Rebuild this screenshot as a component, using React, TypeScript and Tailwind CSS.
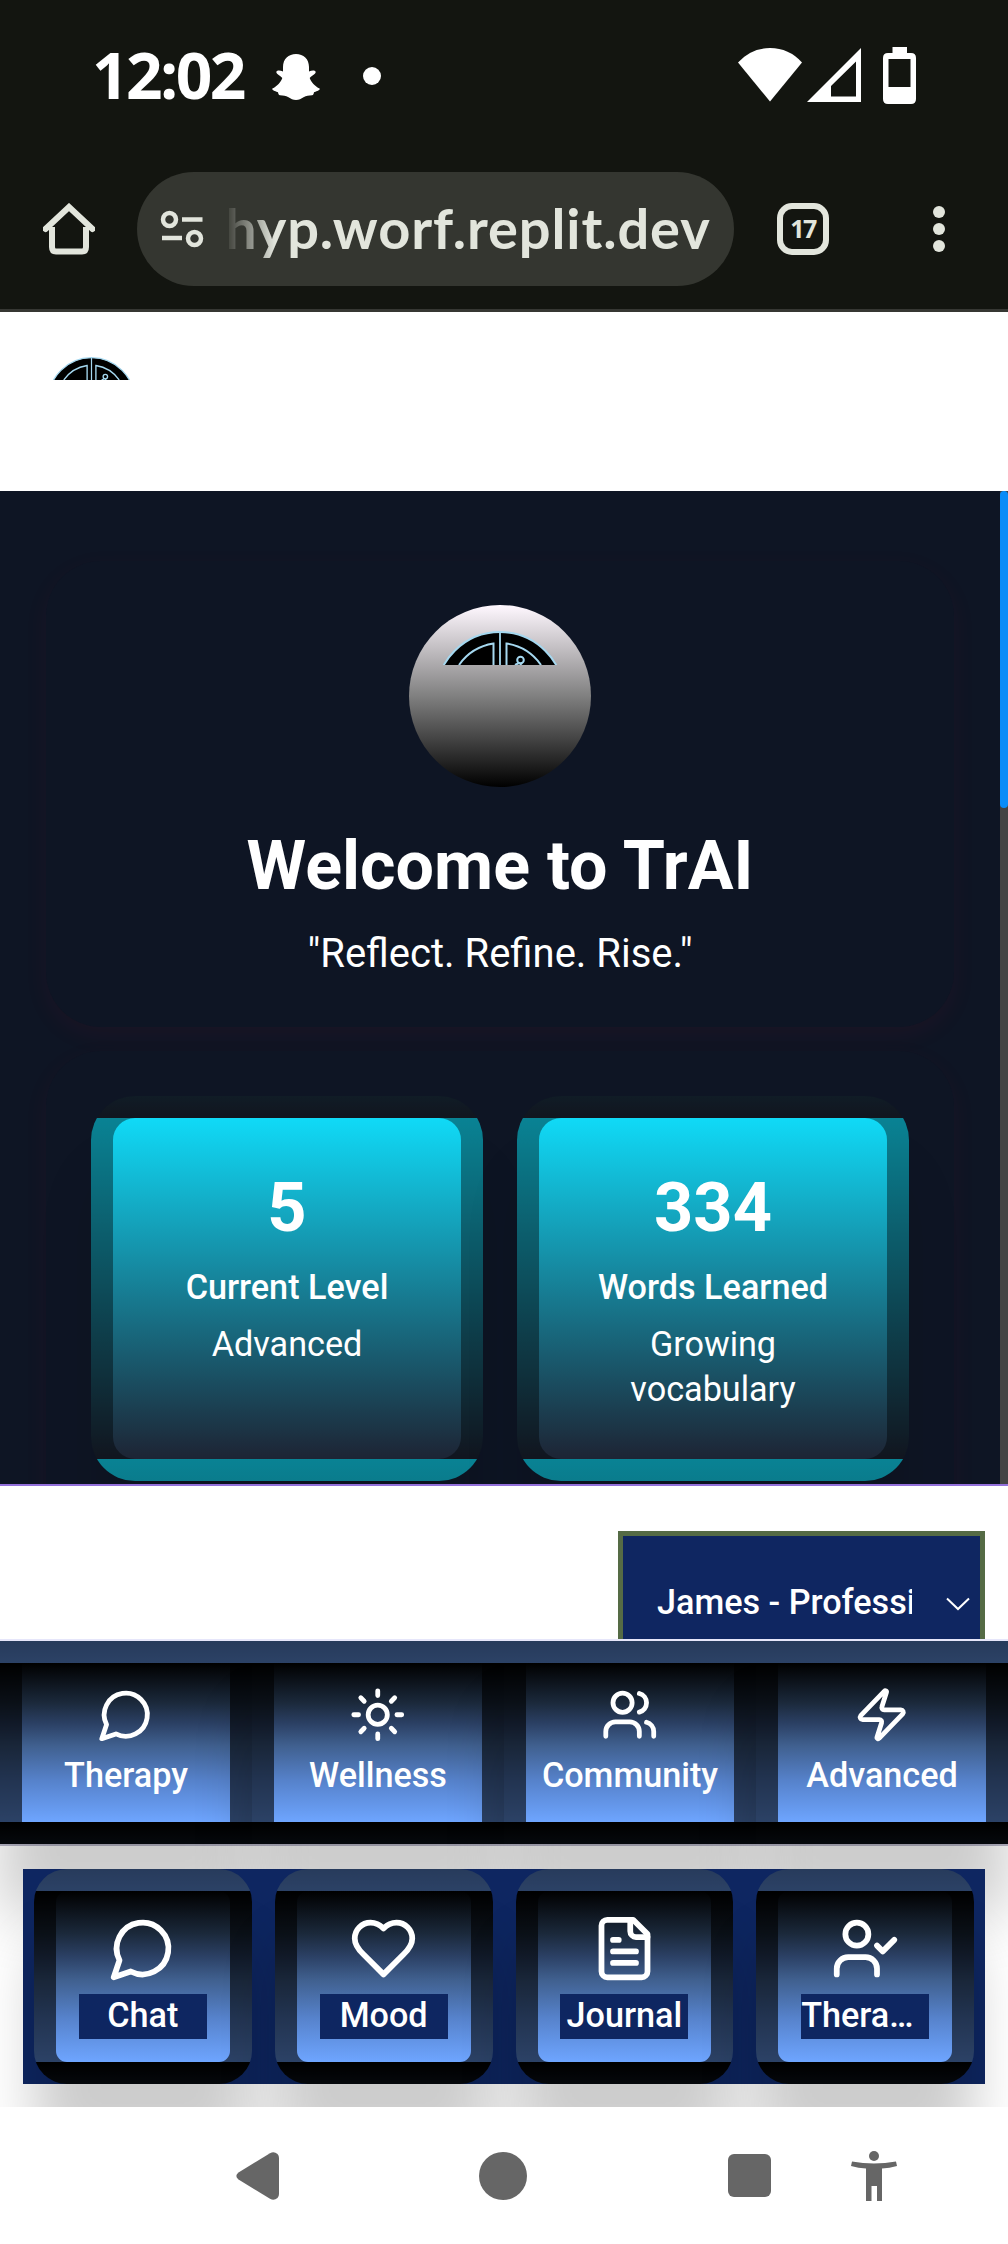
import React from "react";

const strokeProps = {
  viewBox: "0 0 24 24",
  fill: "none",
  stroke: "currentColor",
  strokeWidth: 2,
  strokeLinecap: "round" as const,
  strokeLinejoin: "round" as const,
};

type IconProps = { className: string };

const MessageIcon = ({ className }: IconProps) => (
  <svg {...strokeProps} className={className}>
    <path d="M7.9 20A9 9 0 1 0 4 16.1L2 22Z" />
  </svg>
);

const SunIcon = ({ className }: IconProps) => (
  <svg {...strokeProps} className={className}>
    <circle cx="12" cy="12" r="4" />
    <path d="M12 2v2M12 20v2M4.93 4.93l1.41 1.41M17.66 17.66l1.41 1.41M2 12h2M20 12h2M6.34 17.66l-1.41 1.41M19.07 4.93l-1.41 1.41" />
  </svg>
);

const UsersIcon = ({ className }: IconProps) => (
  <svg {...strokeProps} className={className}>
    <path d="M16 21v-2a4 4 0 0 0-4-4H6a4 4 0 0 0-4 4v2" />
    <circle cx="9" cy="7" r="4" />
    <path d="M22 21v-2a4 4 0 0 0-3-3.87M16 3.13a4 4 0 0 1 0 7.75" />
  </svg>
);

const ZapIcon = ({ className }: IconProps) => (
  <svg {...strokeProps} className={className}>
    <path d="M4 14a1 1 0 0 1-.78-1.63l9.9-10.2a.5.5 0 0 1 .86.46l-1.92 6.02A1 1 0 0 0 13 10h7a1 1 0 0 1 .78 1.63l-9.9 10.2a.5.5 0 0 1-.86-.46l1.92-6.02A1 1 0 0 0 11 14z" />
  </svg>
);

const HeartIcon = ({ className }: IconProps) => (
  <svg {...strokeProps} className={className}>
    <path d="M19 14c1.49-1.46 3-3.21 3-5.5A5.5 5.5 0 0 0 16.5 3c-1.76 0-3 .5-4.5 2-1.5-1.5-2.74-2-4.5-2A5.5 5.5 0 0 0 2 8.5c0 2.3 1.5 4.05 3 5.5l7 7Z" />
  </svg>
);

const FileIcon = ({ className }: IconProps) => (
  <svg {...strokeProps} className={className}>
    <path d="M15 2H6a2 2 0 0 0-2 2v16a2 2 0 0 0 2 2h12a2 2 0 0 0 2-2V7Z" />
    <path d="M14 2v4a2 2 0 0 0 2 2h4M10 9H8M16 13H8M16 17H8" />
  </svg>
);

const UserCheckIcon = ({ className }: IconProps) => (
  <svg {...strokeProps} className={className}>
    <path d="m16 11 2 2 4-4M16 21v-2a4 4 0 0 0-4-4H6a4 4 0 0 0-4 4v2" />
    <circle cx="9" cy="7" r="4" />
  </svg>
);

const BrainLogo = ({ className }: IconProps) => (
  <svg viewBox="-57 0 114 34" className={className} fill="none" stroke="#a5d8f0" strokeWidth="2">
    <circle cx="0" cy="65" r="64" fill="#000" />
    <path d="M0 1V34" strokeWidth="1.8" />
    <path d="M-6.5 34V12.6A52 52 0 0 0-41 34M6.5 34V12.6A52 52 0 0 1 41 34" />
    <circle cx="20.5" cy="29" r="3.3" />
    <path d="M19 32L15 34M22 32L20 34" />
  </svg>
);

function StatusBar() {
  return (
    <div className="flex h-[152px] items-start pl-[92px] pr-[92px] pt-[47px] text-white">
      <span className="-mt-[7px] w-[180px] font-['Open_Sans',sans-serif] text-[64px] font-bold leading-[70px] tracking-[-2.6px]">
        12:02
      </span>
      <svg viewBox="0 0 48 48" className="mt-[6px] h-[48px] w-[48px]" fill="currentColor">
        <path d="M24 1C16.500 1 11 6 11 14v4.500C8.500 17.500 5.500 17 4.500 18.500c-1.200 2.500 5 4.500 5.800 6.500C9 29 5 33.500.4 35.500c-1.200 1.800 4 3 5.600 3.800.2 1.500.7 2.800 2 3 3.500.4 5.500 0 8.500 2 2.300 1.600 4.500 2.700 7.500 2.700s5.200-1.100 7.500-2.700c3-2 5-1.600 8.500-2 1.300-.2 1.800-1.500 2-3 1.600-.8 6.800-2 5.600-3.800C43 33.500 39 29 37.700 25c.8-2 7-4 5.800-6.500-1-1.500-4-1-6.500 0V14C37 6 31.500 1 24 1Z" />
      </svg>
      <span className="ml-[43px] mt-[20px] h-[18px] w-[18px] rounded-full bg-white" />
      <div className="ml-auto flex">
        <svg viewBox="0 0 64 54" className="mt-[1px] h-[54px] w-[64px]" fill="currentColor">
          <path d="M32 53.500L0 14.500Q13 0 32 0T64 14.500Z" />
        </svg>
        <svg viewBox="0 0 54 54" className="ml-[5px] mt-[1px] h-[54px] w-[54px]" fill="currentColor" fillRule="evenodd">
          <path d="M54 0V54H0ZM49 13.500L24 38V48.500H49Z" />
        </svg>
        <svg viewBox="0 0 33 57" className="ml-[22px] h-[57px] w-[33px]" fill="currentColor" fillRule="evenodd">
          <path d="M9.500 0H24V6H28Q33 6 33 11V52Q33 57 28 57H5Q0 57 0 52V11Q0 6 5 6H9.500ZM5.500 12V40H27.500V12Z" />
        </svg>
      </div>
    </div>
  );
}

function BrowserBar() {
  return (
    <div className="flex h-[157px] items-start pt-5 text-[#e2e5dc]">
      <svg viewBox="0 0 52 52" className="ml-[43px] mt-[31px] h-[52px] w-[52px]" fill="none" stroke="currentColor" strokeWidth="6">
        <path d="M9 24V44Q9 48.500 13 48.500H39Q43 48.500 43 44V24" />
        <path d="M2.500 26L26 4L49.500 26" strokeLinecap="round" />
      </svg>
      <div className="ml-[42px] flex h-[114px] w-[597px] items-center rounded-full bg-[#343630]">
        <svg viewBox="0 0 44 38" className="ml-[23px] h-[38px] w-[44px]" fill="none" stroke="currentColor" strokeWidth="4.500">
          <circle cx="9.500" cy="9.500" r="6.500" />
          <circle cx="34.500" cy="28.500" r="6.500" />
          <path d="M22 9.500H42.500M2 28H22" />
        </svg>
        <div className="-mt-[3px] ml-[25px] w-[492px] overflow-hidden whitespace-nowrap [mask-image:linear-gradient(to_right,rgba(0,0,0,.1),#000_46px)]">
          <span className="-ml-[4px] block font-['Lato',sans-serif] text-[56px] font-bold leading-[80px] tracking-[0.9px]">
            hyp.worf.replit.dev
          </span>
        </div>
      </div>
      <div className="ml-[43px] mt-[31px] flex h-[52px] w-[52px] items-center justify-center rounded-[15px] border-[6px] border-[#e2e5dc] font-['Open_Sans',sans-serif] text-[25px] font-bold tracking-[-1.500px]">
        17
      </div>
      <div className="ml-[104px] mt-[34px] flex flex-col gap-[5px]">
        <span className="h-3 w-3 rounded-full bg-[#e2e5dc]" />
        <span className="h-3 w-3 rounded-full bg-[#e2e5dc]" />
        <span className="h-3 w-3 rounded-full bg-[#e2e5dc]" />
      </div>
    </div>
  );
}

function StatCard({ value, label, note }: { value: string; label: string; note: string }) {
  return (
    <div className="h-[385px] w-[392px] rounded-[44px] border-[22px] border-black/40 bg-[linear-gradient(#10daf7,#1d2434)] px-[44px] pt-[50px] text-center shadow-[0_72px_55px_rgba(0,0,0,.1)] [background-clip:border-box]">
      <div className="text-[68.500px] font-bold leading-[80px]">{value}</div>
      <div className="mt-[17px] whitespace-nowrap text-[34.200px] font-medium leading-[45px]">{label}</div>
      <div className="mt-[12px] text-[34.200px] leading-[45px]">{note}</div>
    </div>
  );
}

function Dashboard() {
  return (
    <main className="flex h-[993px] overflow-hidden bg-[#0e1524] text-white">
      <div className="w-[1000px] px-[46px] pt-[70px]">
        <section className="flex h-[466px] flex-col items-center rounded-[55px] bg-[#0e1524] pt-[44px] shadow-[0_8px_26px_rgba(255,20,60,.055)]">
          <div className="flex h-[182px] w-[182px] justify-center rounded-full bg-[linear-gradient(#fff8ff,#808080_50%,#000)]">
            <BrainLogo className="mt-[26px] h-[34px] w-[114px]" />
          </div>
          <h1 className="mt-[38px] text-[68.200px] font-bold leading-[83px]">Welcome to TrAI</h1>
          <p className="mt-[16px] text-[40px] leading-[60px]">"Reflect. Refine. Rise."</p>
        </section>
        <section className="mt-[24px] flex h-[700px] gap-[34px] rounded-[55px] bg-[#0e1524] px-[45px] pt-[45px] shadow-[0_8px_26px_rgba(255,20,60,.055)]">
          <StatCard value="5" label="Current Level" note="Advanced" />
          <StatCard value="334" label="Words Learned" note="Growing vocabulary" />
        </section>
      </div>
      <div className="w-2 bg-[#444]">
        <div className="h-[317px] w-2 rounded-[4px] bg-[#0a8cf8]" />
      </div>
    </main>
  );
}

function VoicePicker() {
  return (
    <div className="flex h-[157px] justify-end overflow-hidden border-b-2 border-t-2 border-b-[#e6e6fa] border-t-[#9370db] bg-white pr-[23px] pt-[45px]">
      <div className="flex h-[130px] w-[367px] items-start border-[5px] border-[#556b45] bg-[#0f2661] pl-[34px] pt-[44px] text-white">
        <div className="w-[255px] overflow-hidden whitespace-nowrap text-[34.200px] font-medium leading-[45px]">
          James - Professional
        </div>
        <svg viewBox="0 0 24 14" className="ml-[34px] mt-[17px] h-[14px] w-[24px] shrink-0" fill="none" stroke="currentColor" strokeWidth="2">
          <path d="M1 1.500L12 12L23 1.500" />
        </svg>
      </div>
    </div>
  );
}

const categories = [
  { label: "Therapy", Icon: MessageIcon },
  { label: "Wellness", Icon: SunIcon },
  { label: "Community", Icon: UsersIcon },
  { label: "Advanced", Icon: ZapIcon },
];

const shortcuts = [
  { label: "Chat", Icon: MessageIcon, align: "text-center" },
  { label: "Mood", Icon: HeartIcon, align: "text-center" },
  { label: "Journal", Icon: FileIcon, align: "text-center" },
  { label: "Therapist", Icon: UserCheckIcon, align: "text-left" },
];

function Navigation() {
  return (
    <div className="h-[466px] overflow-hidden bg-white text-white">
      <nav className="grid grid-cols-4 border-b-2 border-[#b9b8c9]">
        {categories.map(({ label, Icon }) => (
          <button
            key={label}
            className="flex h-[203px] flex-col items-center border-[22px] border-black/60 bg-[linear-gradient(#000,#1b293b_25%,#2b4064_38%,#40608f_52%,#5682cb_74%,#6ea5ff)] pt-[23px] text-[34.200px] font-medium leading-[45px] shadow-[0_72px_55px_rgba(0,0,0,.2)] [background-clip:border-box]"
          >
            <Icon className="h-[57.500px] w-[57.500px] shrink-0" />
            <span className="mt-[9px]">{label}</span>
          </button>
        ))}
      </nav>
      <nav className="relative mx-[23px] mt-[23px] flex h-[215px] gap-[23px] bg-[#0e2661] px-[11px]">
        {shortcuts.map(({ label, Icon, align }) => (
          <button
            key={label}
            className="flex h-[215px] w-[218px] flex-col items-center rounded-[33px] border-[22px] border-black/60 bg-[linear-gradient(#000,#1b293b_25%,#2b4064_38%,#40608f_52%,#5682cb_74%,#6ea5ff)] pt-[23px] text-[34.200px] font-medium leading-[45px] shadow-[0_72px_55px_rgba(0,0,0,.2)] [background-clip:border-box]"
          >
            <Icon className="h-[69px] w-[69px] shrink-0" />
            <span className={`mt-[11px] block h-[45px] w-[128px] overflow-hidden text-ellipsis whitespace-nowrap bg-[#0e2661] leading-[43px] ${align}`}>
              {label}
            </span>
          </button>
        ))}
      </nav>
    </div>
  );
}

function SystemNav() {
  return (
    <div className="flex h-[137px] items-center bg-white text-[#666]">
      <svg viewBox="0 0 43 48" className="ml-[236px] h-[48px] w-[43px]" fill="currentColor">
        <path d="M34 1.200Q38 -1.200 41.500 2Q43 3.500 43 6V42Q43 44.500 41.500 46Q38 49.200 34 46.800L2.500 27.500Q-1.800 24 2.500 20.500Z" />
      </svg>
      <span className="ml-[200px] h-[48px] w-[48px] rounded-full bg-[#666]" />
      <span className="ml-[201px] h-[43px] w-[43px] rounded-[6px] bg-[#666]" />
      <svg viewBox="0 0 46 50" className="ml-[80px] h-[50px] w-[46px]" fill="currentColor">
        <circle cx="23" cy="5" r="5" />
        <path d="M1 10.500Q23 14.500 45 10.500L46 15Q38.500 17 31 17.500V50H26V35H20.500V50H15V17.500Q7.500 17 0 15Z" />
      </svg>
    </div>
  );
}

export default function App() {
  return (
    <div className="w-[1008px] overflow-hidden bg-white font-['Roboto',sans-serif]">
      <div className="h-[312px] border-b-[3px] border-[#363733] bg-[#131510]">
        <StatusBar />
        <BrowserBar />
      </div>
      <header className="h-[179px] bg-white pl-[53px] pt-[45px]">
        <BrainLogo className="h-[23px] w-[77px]" />
      </header>
      <Dashboard />
      <VoicePicker />
      <Navigation />
      <SystemNav />
    </div>
  );
}
